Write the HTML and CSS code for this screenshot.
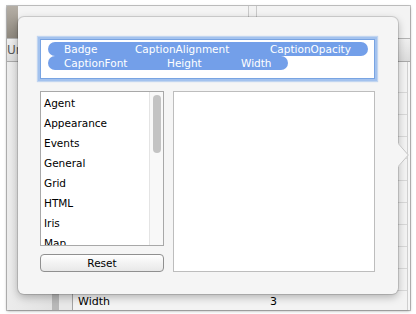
FILE: index.html
```html
<!DOCTYPE html>
<html>
<head>
<meta charset="utf-8">
<link rel="stylesheet" href="styles.css">
</head>
<body>
<div class="frame">
  <div class="shot">
    <div class="band-top">
      <div class="dark"></div>
      <div class="ta"></div>
      <div class="tb"></div>
      <div class="tc"></div>
    </div>
    <div class="band-head"><span class="head-text">Unit</span></div>
    <div class="band-body">
      <div class="bc1"></div>
      <div class="bc2"></div>
      <div class="bc3"></div>
      <div class="table">
        <div class="row row-first"></div>
        <div class="row"></div>
        <div class="row"></div>
        <div class="row"></div>
        <div class="row"></div>
        <div class="row"></div>
        <div class="row"></div>
        <div class="row"></div>
        <div class="row"></div>
        <div class="row"></div>
        <div class="row row-last">
          <span class="cell-name">Width</span>
          <span class="cell-val">3</span>
        </div>
      </div>
      <div class="rstrip"></div>
    </div>

    <div class="popover">
      <div class="tokens">
        <div class="trow trow1">
          <span class="tk w-badge">Badge</span>
          <span class="tk w-calign">CaptionAlignment</span>
          <span class="tk w-copac">CaptionOpacity</span>
        </div>
        <div class="trow trow2">
          <span class="tk w-cfont">CaptionFont</span>
          <span class="tk w-height">Height</span>
          <span class="tk w-width">Width</span>
        </div>
      </div>
      <div class="main">
        <div class="left">
          <div class="list">
            <div class="items">
              <div class="item">Agent</div>
              <div class="item">Appearance</div>
              <div class="item">Events</div>
              <div class="item">General</div>
              <div class="item">Grid</div>
              <div class="item">HTML</div>
              <div class="item">Iris</div>
              <div class="item">Map</div>
            </div>
            <div class="scroller"><div class="thumb"></div></div>
          </div>
          <button class="reset">Reset</button>
        </div>
        <div class="panel"></div>
      </div>
      <svg class="arrow" width="11" height="24" viewBox="0 0 11 24">
        <polygon points="0,0 10.5,12 0,24" fill="#f5f5f5"/>
        <polyline points="0,0.3 10.3,12 0,23.7" fill="none" stroke="#c4c4c4" stroke-width="1"/>
      </svg>
    </div>
  </div>
</div>
</body>
</html>
```

FILE: styles.css
```css
* { box-sizing: border-box; }
html, body { margin: 0; padding: 0; }
body {
  width: 416px;
  height: 314px;
  overflow: hidden;
  background: #ffffff;
  font-family: "DejaVu Sans", "Liberation Sans", sans-serif;
  font-size: 10.5px;
}
.frame { padding: 6px 0 0 7px; }
.shot {
  position: relative;
  width: 403px;
  height: 304px;
  background: #ececec;
  box-shadow: 0 0 0 1px rgba(0,0,0,0.22), 0 1px 3px rgba(0,0,0,0.35);
  overflow: hidden;
  display: flex;
  flex-direction: column;
}
.band-top { display: flex; height: 32px; flex: none; }
.dark { width: 11px; background: linear-gradient(#b5afa6, #8e887e); }
.ta { width: 230px; background: #f4f4f4; }
.tb { width: 8px; background: #f2f2f2; border-left: 1px solid #c9c9c9; }
.tc { flex: 1; background: #f3f3f3; border-left: 1px solid #c9c9c9; }
.band-head {
  height: 24px;
  flex: none;
  border-top: 1px solid #b3b3b3;
  border-bottom: 1px solid #a9a9a9;
  background: linear-gradient(#efefef, #dbdbdb);
  font-size: 12px;
  line-height: 22px;
  color: #5a5a5a;
  padding-left: 0;
}
.band-body { flex: 1; display: flex; min-height: 0; }
.bc1 { width: 45px; background: linear-gradient(90deg, #ececec, #e2e2e2); }
.bc2 { width: 7px; background: #b8b8b8; }
.bc3 { width: 14px; background: #e8e8e8; border-right: 1px solid #a4a4a4; }
.table { flex: 1; display: flex; flex-direction: column; background: #f3f3f3; }
.row { height: 22px; border-bottom: 1px solid #d8d8d8; display: flex; align-items: center; flex: none; }
.row-first { height: 31px; }
.row-last { flex: 1; height: auto; border-bottom: none; font-size: 11px; color: #000; padding-top: 1px; }
.cell-name { width: 192px; padding-left: 5px; }
.cell-val { padding-left: 5px; }
.rstrip { width: 3px; background: #f6f6f6; border-left: 1px solid #cfcfcf; }

.popover {
  position: absolute;
  left: 11px;
  top: 11px;
  width: 380px;
  height: 277px;
  background: #f5f5f5;
  border-radius: 6px;
  box-shadow: 0 0 0 1px rgba(0,0,0,0.13), 0 3px 9px rgba(0,0,0,0.28);
  padding: 22px 23px 22px 22px;
  display: flex;
  flex-direction: column;
}
.tokens {
  height: 40px;
  flex: none;
  background: #ffffff;
  border: 1px solid #79a4e2;
  box-shadow: 0 0 0 2px #a3c2ee, 0 0 1px 3px rgba(150,185,235,0.55);
  padding: 2px 0 0 7px;
  display: flex;
  flex-direction: column;
}
.trow {
  display: flex;
  height: 14px;
  line-height: 14px;
  background: #739fe9;
  border-radius: 7px;
  color: #ffffff;
  flex: none;
}
.trow1 { width: 320px; }
.trow2 { width: 240px; }
.tk { padding-left: 16px; white-space: nowrap; overflow: hidden; }
.w-badge { width: 71px; }
.w-calign { width: 135px; }
.w-copac { flex: 1; }
.w-cfont { width: 103px; }
.w-height { width: 74px; }
.w-width { flex: 1; }

.main { display: flex; gap: 9px; margin-top: 12px; height: 181px; flex: none; }
.left { width: 124px; display: flex; flex-direction: column; gap: 8px; }
.list {
  height: 155px;
  flex: none;
  background: #ffffff;
  border: 1px solid #a8a8a8;
  display: flex;
  overflow: hidden;
}
.items { flex: 1; padding: 1px 0 0 3px; }
.item { height: 20px; line-height: 20px; color: #000; white-space: nowrap; }
.scroller {
  width: 14px;
  border-left: 1px solid #e4e4e4;
  background: #f8f8f8;
  padding: 3px 0 0 3px;
}
.thumb { width: 8px; height: 58px; border-radius: 4px; background: #c3c3c3; }
.reset {
  height: 18px;
  flex: none;
  margin: 0;
  padding: 0;
  border: 1px solid #909090;
  border-radius: 4px;
  background: linear-gradient(#ffffff, #f3f3f3 50%, #e8e8e8);
  font-family: "DejaVu Sans", "Liberation Sans", sans-serif;
  font-size: 10.5px;
  line-height: 16px;
  color: #000;
  text-align: center;
}
.panel { flex: 1; background: #ffffff; border: 1px solid #bdbdbd; }
.arrow { position: absolute; right: -11px; top: 126px; }
```
